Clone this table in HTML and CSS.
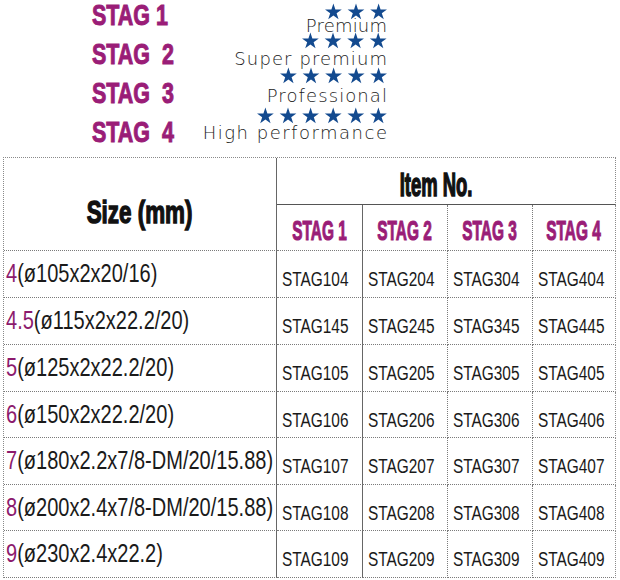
FILE: index.html
```html
<!DOCTYPE html>
<html lang="en">
<head>
<meta charset="utf-8">
<title>STAG diamond blades</title>
<link rel="stylesheet" href="styles.css">
</head>
<body>
<svg class="defs" width="0" height="0" aria-hidden="true">
  <defs>
    <polygon id="star" points="0,-8.8 1.98,-2.73 8.37,-2.72 3.21,1.04 5.17,7.12 0,3.38 -5.17,7.12 -3.21,1.04 -8.37,-2.72 -1.98,-2.73"/>
  </defs>
</svg>
<div class="page">
  <div class="legend">
    <div class="grades">
      <div class="grade"><span class="grade-text">STAG 1</span></div>
      <div class="grade"><span class="grade-text">STAG&nbsp; 2</span></div>
      <div class="grade"><span class="grade-text">STAG&nbsp; 3</span></div>
      <div class="grade"><span class="grade-text">STAG&nbsp; 4</span></div>
    </div>
    <div class="ratings">
      <div class="stars s1"><svg width="62" height="17" viewBox="0 0 62 17"><use href="#star" x="8.4" y="9.2"/><use href="#star" x="31" y="9.2"/><use href="#star" x="53.6" y="9.2"/></svg></div>
      <div class="rating-label t1">Premium</div>
      <div class="stars s2"><svg width="85" height="17" viewBox="0 0 85 17"><use href="#star" x="8.4" y="9.2"/><use href="#star" x="31" y="9.2"/><use href="#star" x="53.6" y="9.2"/><use href="#star" x="76.2" y="9.2"/></svg></div>
      <div class="rating-label t2">Super premium</div>
      <div class="stars s3"><svg width="107" height="17" viewBox="0 0 107 17"><use href="#star" x="8.4" y="9.2"/><use href="#star" x="31" y="9.2"/><use href="#star" x="53.6" y="9.2"/><use href="#star" x="76.2" y="9.2"/><use href="#star" x="98.6" y="9.2"/></svg></div>
      <div class="rating-label t3">Professional</div>
      <div class="stars s4"><svg width="130" height="17" viewBox="0 0 130 17"><use href="#star" x="8.4" y="9.2"/><use href="#star" x="31" y="9.2"/><use href="#star" x="53.6" y="9.2"/><use href="#star" x="76.2" y="9.2"/><use href="#star" x="98.8" y="9.2"/><use href="#star" x="121.4" y="9.2"/></svg></div>
      <div class="rating-label t4">High performance</div>
    </div>
  </div>

  <div class="spec-table">
    <div class="cell head-size"><span class="size-title">Size (mm)</span></div>
    <div class="cell head-item"><span class="item-title">Item No.</span></div>
    <div class="cell head-grade c2"><span class="grade-title">STAG 1</span></div>
    <div class="cell head-grade c3"><span class="grade-title">STAG 2</span></div>
    <div class="cell head-grade c4"><span class="grade-title">STAG 3</span></div>
    <div class="cell head-grade c5"><span class="grade-title">STAG 4</span></div>

    <div class="cell size c1"><span class="size-text"><span class="num">4</span>(ø105x2x20/16)</span></div>
    <div class="cell item c2"><span class="item-text">STAG104</span></div>
    <div class="cell item c3"><span class="item-text">STAG204</span></div>
    <div class="cell item c4"><span class="item-text">STAG304</span></div>
    <div class="cell item c5"><span class="item-text">STAG404</span></div>

    <div class="cell size c1"><span class="size-text"><span class="num">4.5</span>(ø115x2x22.2/20)</span></div>
    <div class="cell item c2"><span class="item-text">STAG145</span></div>
    <div class="cell item c3"><span class="item-text">STAG245</span></div>
    <div class="cell item c4"><span class="item-text">STAG345</span></div>
    <div class="cell item c5"><span class="item-text">STAG445</span></div>

    <div class="cell size c1"><span class="size-text"><span class="num">5</span>(ø125x2x22.2/20)</span></div>
    <div class="cell item c2"><span class="item-text">STAG105</span></div>
    <div class="cell item c3"><span class="item-text">STAG205</span></div>
    <div class="cell item c4"><span class="item-text">STAG305</span></div>
    <div class="cell item c5"><span class="item-text">STAG405</span></div>

    <div class="cell size c1"><span class="size-text"><span class="num">6</span>(ø150x2x22.2/20)</span></div>
    <div class="cell item c2"><span class="item-text">STAG106</span></div>
    <div class="cell item c3"><span class="item-text">STAG206</span></div>
    <div class="cell item c4"><span class="item-text">STAG306</span></div>
    <div class="cell item c5"><span class="item-text">STAG406</span></div>

    <div class="cell size c1"><span class="size-text"><span class="num">7</span>(ø180x2.2x7/8-DM/20/15.88)</span></div>
    <div class="cell item c2"><span class="item-text">STAG107</span></div>
    <div class="cell item c3"><span class="item-text">STAG207</span></div>
    <div class="cell item c4"><span class="item-text">STAG307</span></div>
    <div class="cell item c5"><span class="item-text">STAG407</span></div>

    <div class="cell size c1"><span class="size-text"><span class="num">8</span>(ø200x2.4x7/8-DM/20/15.88)</span></div>
    <div class="cell item c2"><span class="item-text">STAG108</span></div>
    <div class="cell item c3"><span class="item-text">STAG208</span></div>
    <div class="cell item c4"><span class="item-text">STAG308</span></div>
    <div class="cell item c5"><span class="item-text">STAG408</span></div>

    <div class="cell size c1"><span class="size-text"><span class="num">9</span>(ø230x2.4x22.2)</span></div>
    <div class="cell item c2"><span class="item-text">STAG109</span></div>
    <div class="cell item c3"><span class="item-text">STAG209</span></div>
    <div class="cell item c4"><span class="item-text">STAG309</span></div>
    <div class="cell item c5"><span class="item-text">STAG409</span></div>
  </div>
</div>
</body>
</html>
```
FILE: styles.css
```css
* { box-sizing: border-box; }

html, body {
  margin: 0;
  padding: 0;
  background: #ffffff;
}

body {
  font-family: "Liberation Sans", Arial, sans-serif;
  color: #1a1a1a;
}

.defs {
  position: absolute;
  width: 0;
  height: 0;
  overflow: hidden;
}

.page {
  width: 620px;
  height: 580px;
  overflow: hidden;
}

/* ---------- legend ---------- */
.legend {
  height: 157px;
  display: flex;
  padding-left: 92px;
}

.grades {
  width: 100px;
  display: flex;
  flex-direction: column;
  gap: 9px;
}

.grade {
  height: 30px;
  line-height: 30px;
  white-space: nowrap;
}

.grade-text {
  display: inline-block;
  font-size: 29px;
  font-weight: bold;
  color: #9a1d77;
  -webkit-text-stroke: 1px #9a1d77;
  transform: scaleX(0.74);
  transform-origin: left center;
}

.ratings {
  width: 195px;
  padding-top: 2px;
  display: grid;
  grid-template-rows: 18px 11.5px 18px 18.5px 14px 27.5px 12px 22.5px;
  justify-items: end;
}

.stars {
  display: flex;
  align-items: center;
  height: 100%;
}

.stars svg {
  display: block;
  fill: #134a8f;
}

.rating-label {
  font-family: "DejaVu Sans", sans-serif;
  font-weight: 200;
  font-size: 18px;
  color: #1a1a1a;
  letter-spacing: 1.1px;
  margin-right: -1.1px;
  white-space: nowrap;
}

.t1 { line-height: 11.5px; letter-spacing: 0.2px; margin-right: -0.2px; }
.t2 { line-height: 18.5px; }
.t3 { line-height: 27.5px; }
.t4 { line-height: 22.5px; letter-spacing: 1.5px; margin-right: -1.5px; }

/* ---------- table ---------- */
.spec-table {
  margin-left: 3px;
  width: 613px;
  display: grid;
  grid-template-columns: 273px 86px 85px 85px 83px;
  grid-template-rows: 47px 46px 47px 47px 47px 46px 47px 46px 47px;
  border-top: 1px dotted #8a8a8a;
  border-left: 1px dotted #8a8a8a;
}

.cell {
  display: flex;
  align-items: flex-start;
  white-space: nowrap;
  border-bottom: 1px dotted #7a7a7a;
}

.c1 { border-right: 1px solid #666666; }
.c2 { border-right: 1px solid #666666; }
.c3 { border-right: 1px dotted #7a7a7a; }
.c4 { border-right: 1px dotted #7a7a7a; }
.c5 { border-right: 1px dotted #8a8a8a; }

.head-size {
  grid-row: 1 / 3;
  grid-column: 1;
  justify-content: center;
  padding-top: 36px;
  border-right: 1px solid #666666;
}

.size-title {
  display: inline-block;
  font-size: 32px;
  line-height: 36px;
  font-weight: bold;
  color: #111111;
  -webkit-text-stroke: 1.4px #111111;
  transform: scaleX(0.7);
}

.head-item {
  grid-row: 1;
  grid-column: 2 / 6;
  justify-content: center;
  padding-top: 8px;
  padding-right: 19px;
  border-right: 1px dotted #8a8a8a;
  border-bottom: 1px solid #555555;
}

.item-title {
  display: inline-block;
  font-size: 33.5px;
  line-height: 38px;
  font-weight: bold;
  color: #111111;
  -webkit-text-stroke: 1.6px #111111;
  transform: scaleX(0.55);
}

.head-grade {
  justify-content: center;
  padding-top: 10px;
}

.grade-title {
  display: inline-block;
  font-size: 28px;
  line-height: 32px;
  font-weight: bold;
  color: #9a1d77;
  -webkit-text-stroke: 1.1px #9a1d77;
  transform: scaleX(0.55);
}

.size {
  padding-top: 7px;
  padding-left: 2px;
}

.size-text {
  display: inline-block;
  font-size: 26px;
  line-height: 30px;
  color: #1a1a1a;
  transform: scaleX(0.77);
  transform-origin: left center;
}

.num { color: #8c1a6d; }

.item {
  padding-top: 18px;
  padding-left: 5px;
}

.item-text {
  display: inline-block;
  font-size: 19.5px;
  line-height: 20px;
  color: #1a1a1a;
  transform: scaleX(0.79);
  transform-origin: left center;
}
```
